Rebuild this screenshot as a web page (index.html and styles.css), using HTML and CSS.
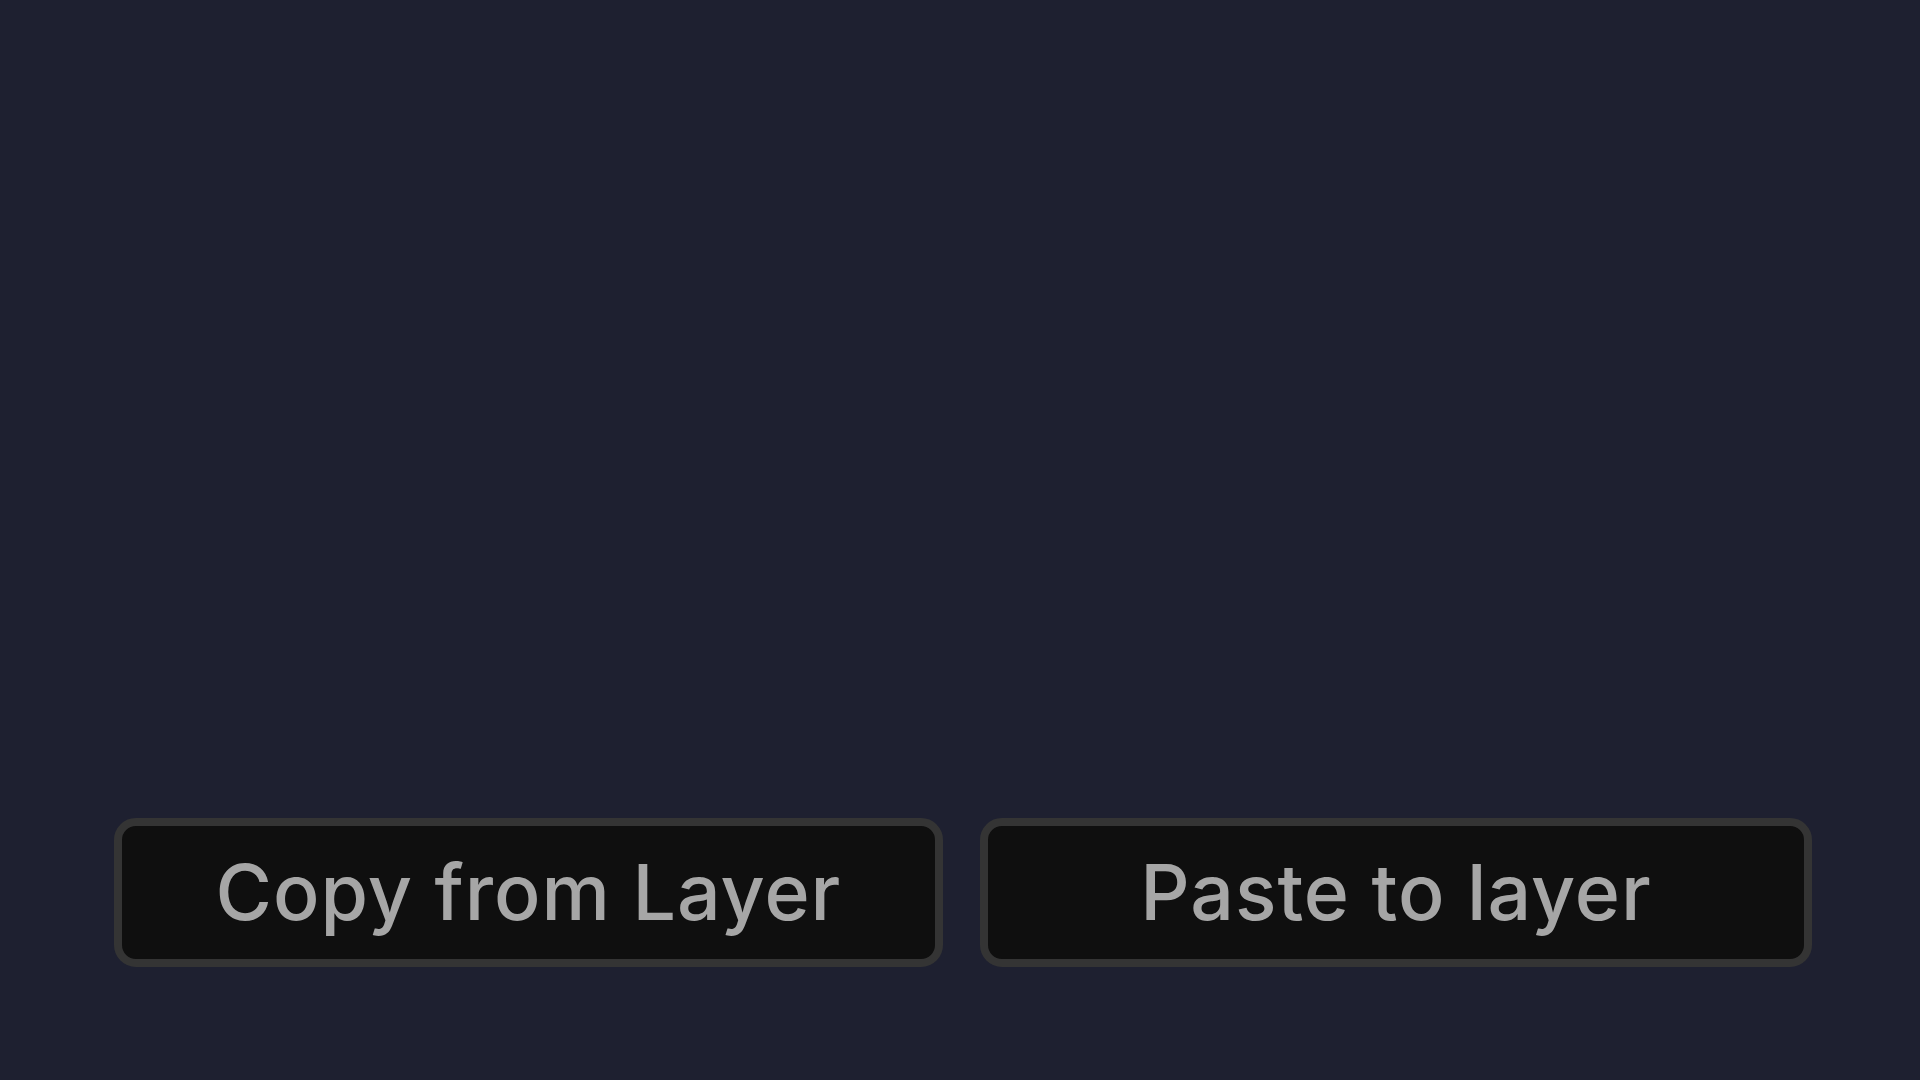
FILE: index.html
```html
<!DOCTYPE html>
<html lang="en">
<head>
<meta charset="utf-8">
<title>Layer</title>
<link rel="stylesheet" href="styles.css">
</head>
<body>
  <main class="stage">
    <div class="actions">
      <button class="btn btn-copy" type="button">Copy from Layer</button>
      <button class="btn btn-paste" type="button">Paste to layer</button>
    </div>
  </main>
</body>
</html>
```

FILE: styles.css
```css
html, body {
  margin: 0;
  padding: 0;
  height: 100%;
}

body {
  background: #1e2030;
  font-family: "Inter", "Liberation Sans", sans-serif;
}

.stage {
  height: 1080px;
  display: flex;
  flex-direction: column;
  justify-content: flex-end;
  box-sizing: border-box;
  padding: 0 108px 113px 114px;
}

.actions {
  display: flex;
  gap: 37px;
}

.btn {
  box-sizing: border-box;
  height: 149px;
  background: #0f0f0f;
  border: 8px solid #343434;
  border-radius: 22px;
  color: #a6a6a6;
  font-family: "Inter", "Liberation Sans", sans-serif;
  font-weight: 500;
  font-size: 77px;
  letter-spacing: 1px;
  display: flex;
  align-items: center;
  justify-content: center;
  padding: 0 0 2px;
}

.btn-copy {
  width: 829px;
}

.btn-paste {
  width: 832px;
}
```
